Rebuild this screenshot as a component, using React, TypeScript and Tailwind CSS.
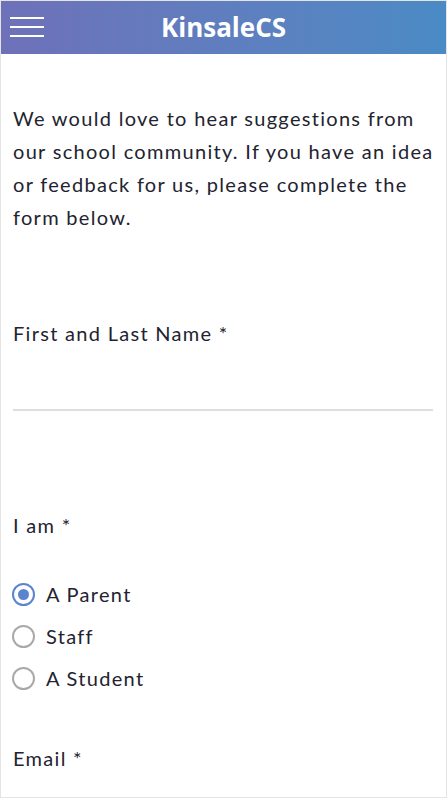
import React from 'react';

const options = ['A Parent', 'Staff', 'A Student'];

function Radio({ checked, label }: { checked?: boolean; label: string }) {
  return (
    <div className="flex h-[42px] items-center">
      <span
        className={
          checked
            ? 'flex h-[23px] w-[23px] items-center justify-center rounded-full border-2 border-[#5b84cf]'
            : 'flex h-[23px] w-[23px] items-center justify-center rounded-full border-2 border-[#a9a9a9]'
        }
      >
        {checked && <span className="h-[11px] w-[11px] rounded-full bg-[#5b84cf]" />}
      </span>
      <span className="ml-[11px]">{label}</span>
    </div>
  );
}

export default function App() {
  return (
    <div
      className="h-[798px] w-[447px] overflow-hidden border border-[#e4e4e4] bg-white text-[20px] leading-[33px] tracking-[0.065em] text-[#23232f]"
      style={{ fontFamily: 'Lato, "Noto Sans", sans-serif' }}
    >
      <header className="relative flex h-[53px] items-center justify-center bg-gradient-to-r from-[#6e71b9] to-[#4a8bc5] tracking-normal">
        <button className="absolute left-[9px] top-[16px] flex w-[34px] flex-col gap-[7px]">
          <span className="h-[2px] w-full bg-white" />
          <span className="h-[2px] w-full bg-white" />
          <span className="h-[2px] w-full bg-white" />
        </button>
        <h1
          className="text-[26px] font-bold text-white"
          style={{ fontFamily: '"Open Sans", sans-serif' }}
        >
          KinsaleCS
        </h1>
      </header>

      <main className="px-[12px]">
        <p className="mt-[48px]">
          We would love to hear suggestions from our school community. If you have an idea or
          feedback for us, please complete the form below.
        </p>

        <label className="mt-[83px] block">First and Last Name *</label>
        <div className="mt-[59px] mr-[1px] h-[2px] bg-[#dedede]" />

        <label className="mt-[98px] block">I am *</label>
        <div className="mt-[31px] -ml-[1px]">
          {options.map((o, i) => (
            <Radio key={o} label={o} checked={i === 0} />
          ))}
        </div>

        <label className="mt-[43px] block">Email *</label>
      </main>
    </div>
  );
}
